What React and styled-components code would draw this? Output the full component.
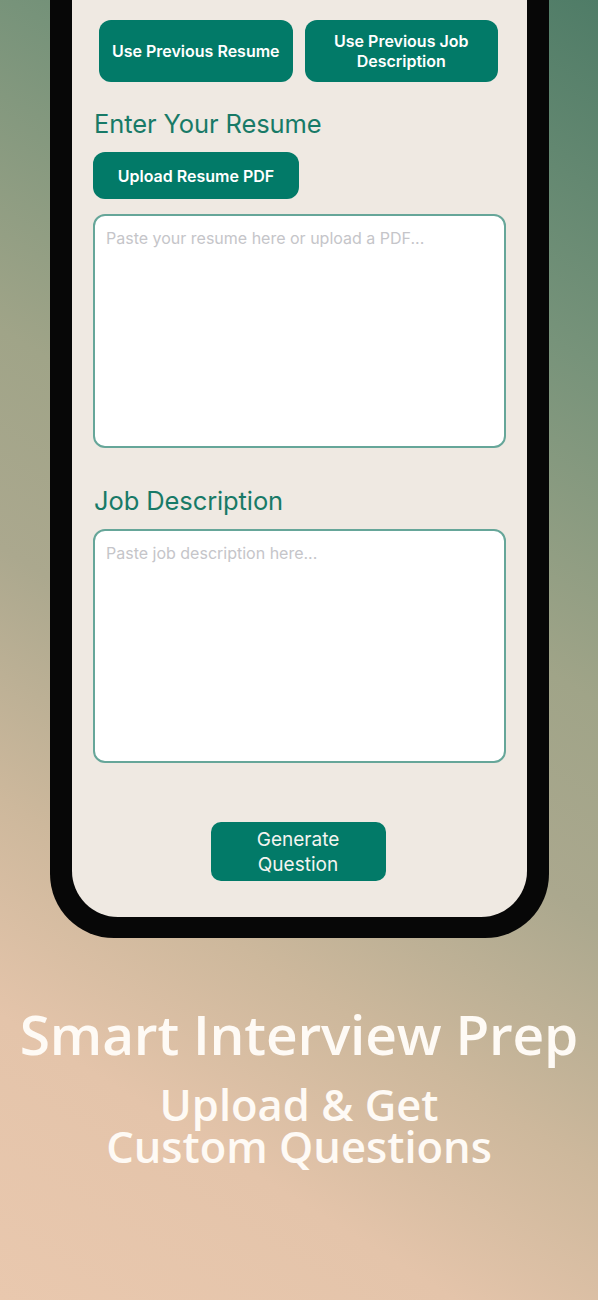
import React from 'react';
import styled, { createGlobalStyle } from 'styled-components';

const GlobalStyle = createGlobalStyle`
  html, body {
    margin: 0;
    padding: 0;
  }
  body {
    font-family: Inter, "Noto Sans", sans-serif;
    background: #e9c8ae;
  }
`;

const Page = styled.div`
  width: 598px;
  min-height: 1300px;
  overflow: hidden;
  background: linear-gradient(
    212deg,
    #4f7c67 0%,
    #77937a 22%,
    #a0a488 42%,
    #aba88e 55%,
    #cdb89c 70%,
    #e4c4aa 83%,
    #e9c8ae 100%
  );
`;

const Phone = styled.div`
  width: 455px;
  margin-left: 50px;
  border: 22px solid #070707;
  border-top: none;
  border-bottom-width: 21px;
  border-radius: 0 0 64px 64px;
  background: #070707;
`;

const Screen = styled.div`
  background: #efe9e2;
  border-radius: 0 0 46px 46px;
  padding: 20px 22px 36px 21px;
  display: flex;
  flex-direction: column;
`;

const TopRow = styled.div`
  display: grid;
  grid-template-columns: 1fr 1fr;
  gap: 12px;
  padding: 0 7px 0 6px;
`;

const PrimaryButton = styled.button`
  border: none;
  background: #027a68;
  color: #ffffff;
  font-family: Inter, "Noto Sans", sans-serif;
  font-weight: 600;
  font-size: 16px;
  line-height: 20px;
  border-radius: 12px;
  cursor: pointer;
  height: ${(p) => p.$height || 62}px;
  padding: 0 ${(p) => p.$padX || 10}px;
  text-align: center;
`;

const UploadButton = styled(PrimaryButton)`
  align-self: flex-start;
  margin-top: 13px;
  width: 206px;
`;

const Heading = styled.h2`
  margin: ${(p) => p.$top}px 0 0 1px;
  font-family: Inter, "Noto Sans", sans-serif;
  font-weight: 400;
  font-size: 25.5px;
  line-height: 30px;
  color: #187a67;
  letter-spacing: -0.1px;
`;

const TextBox = styled.textarea`
  box-sizing: border-box;
  display: block;
  width: 413px;
  height: 234px;
  margin-top: ${(p) => p.$top}px;
  border: 2px solid #66a699;
  border-radius: 12px;
  background: #ffffff;
  padding: 12px 11px;
  resize: none;
  outline: none;
  font-family: Inter, "Noto Sans", sans-serif;
  font-size: 16px;
  line-height: 20px;
  color: #333;

  &::placeholder {
    color: #c5c5c9;
  }
`;

const GenerateButton = styled.button`
  align-self: center;
  margin-top: 59px;
  margin-left: -2px;
  width: 175px;
  height: 59px;
  border: none;
  border-radius: 10px;
  background: #027a68;
  color: #f4f4f0;
  font-family: Inter, "Noto Sans", sans-serif;
  font-weight: 400;
  font-size: 19px;
  line-height: 25px;
  cursor: pointer;
`;

const Caption = styled.div`
  text-align: center;
  color: #fefaf5;
  font-family: "Open Sans", "Noto Sans", sans-serif;
  font-weight: 600;
  margin-top: 66px;
`;

const Title = styled.div`
  font-size: 55px;
  line-height: 60px;
  letter-spacing: -0.2px;
`;

const Subtitle = styled.div`
  margin-top: 20px;
  font-size: 43.5px;
  line-height: 42px;
`;

export default function App() {
  return (
    <>
      <GlobalStyle />
      <Page>
        <Phone>
          <Screen>
            <TopRow>
              <PrimaryButton>Use Previous Resume</PrimaryButton>
              <PrimaryButton>
                Use Previous Job
                <br />
                Description
              </PrimaryButton>
            </TopRow>

            <Heading $top={27}>Enter Your Resume</Heading>
            <UploadButton $height={47}>Upload Resume PDF</UploadButton>
            <TextBox $top={15} placeholder="Paste your resume here or upload a PDF..." />

            <Heading $top={38}>Job Description</Heading>
            <TextBox $top={13} placeholder="Paste job description here..." />

            <GenerateButton>
              Generate
              <br />
              Question
            </GenerateButton>
          </Screen>
        </Phone>

        <Caption>
          <Title>Smart Interview Prep</Title>
          <Subtitle>
            Upload &amp; Get
            <br />
            Custom Questions
          </Subtitle>
        </Caption>
      </Page>
    </>
  );
}
